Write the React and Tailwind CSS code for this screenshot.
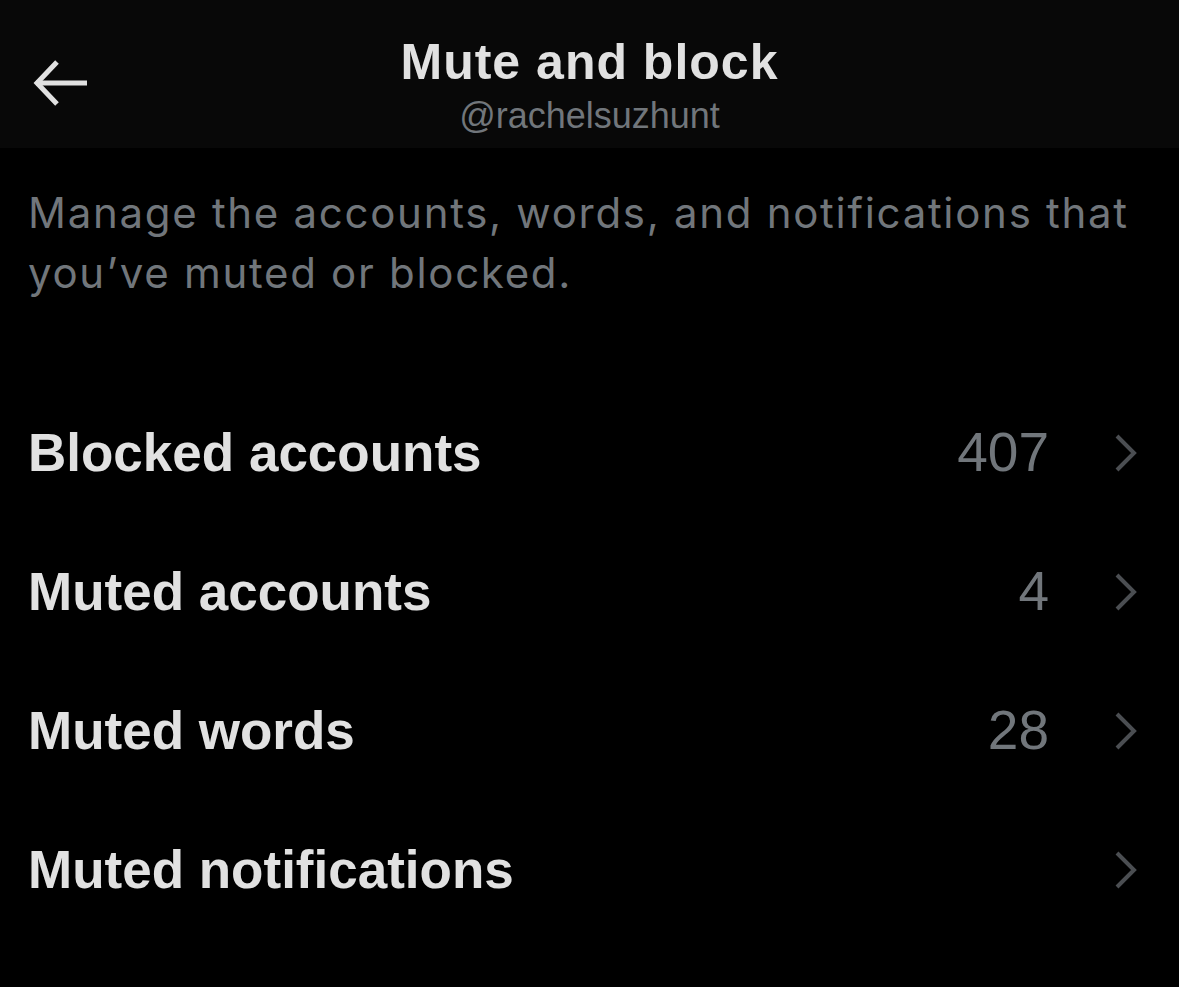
import React from "react";

const rows = [
  { label: "Blocked accounts", count: "407" },
  { label: "Muted accounts", count: "4" },
  { label: "Muted words", count: "28" },
  { label: "Muted notifications", count: "" },
];

function Chevron() {
  return (
    <svg width="26" height="40" viewBox="0 0 26 40" className="shrink-0">
      <path d="M4 3 L21 20 L4 37" fill="none" stroke="#4b4e52" strokeWidth="4" strokeLinecap="butt" strokeLinejoin="miter" />
    </svg>
  );
}

export default function App() {
  return (
    <div className="w-[1179px] h-[987px] bg-black overflow-hidden" style={{ fontFamily: '"Liberation Sans", Arial, sans-serif' }}>
      <header className="relative h-[148px] bg-[#080808] flex flex-col items-center">
        <button className="absolute left-[32px] top-[57px] w-[58px] h-[52px] flex items-center justify-center">
          <svg width="58" height="52" viewBox="0 0 58 52">
            <path d="M4 26 H55" stroke="#e1e1e1" strokeWidth="5" fill="none" />
            <path d="M25 5 L5 26 L25 47" stroke="#e1e1e1" strokeWidth="5" fill="none" strokeLinejoin="miter" />
          </svg>
        </button>
        <h1 className="mt-[32px] text-[50px] leading-[60px] font-bold text-[#e1e1e1] tracking-[1px]">Mute and block</h1>
        <div className="mt-[2px] text-[36px] leading-[44px] text-[#71767b]">@rachelsuzhunt</div>
      </header>

      <p className="px-[28px] pt-[35px] text-[42px] leading-[60px] text-[#71767b] tracking-[1.7px]" style={{ fontFamily: 'Inter, "Liberation Sans", sans-serif' }}>
        Manage the accounts, words, and notifications that you’ve muted or blocked.
      </p>

      <div className="mt-[80px] flex flex-col">
        {rows.map((r) => (
          <div key={r.label} className="h-[139px] flex items-center pl-[28px] pr-[40px]">
            <span className="flex-1 text-[53px] font-bold text-[#e1e1e1] leading-none">{r.label}</span>
            <span className="text-[55px] text-[#71767b] leading-none mr-[64px]">{r.count}</span>
            <Chevron />
          </div>
        ))}
      </div>
    </div>
  );
}
